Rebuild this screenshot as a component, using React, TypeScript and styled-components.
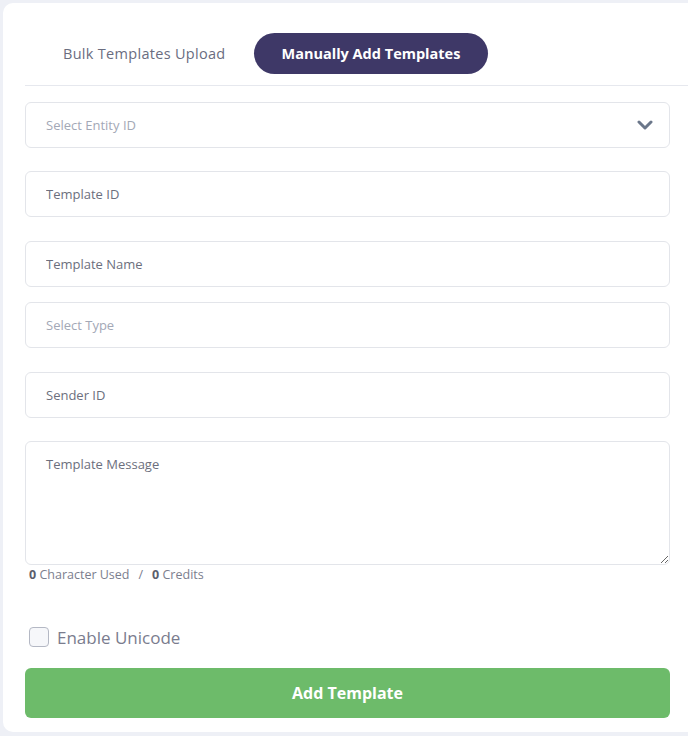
import React from "react";
import styled, { createGlobalStyle } from "styled-components";

const Global = createGlobalStyle`
  html, body { margin: 0; padding: 0; background: #eef0f6; }
  body { font-family: "Open Sans", "Noto Sans", sans-serif; }
  * { box-sizing: border-box; }
`;

const Page = styled.div`
  padding: 3px 0 4px 3px;
  height: 736px;
`;

const Card = styled.div`
  background: #ffffff;
  border-radius: 10px 0 0 10px;
  height: 729px;
  padding: 30px 18px 0 22px;
  display: flex;
  flex-direction: column;
`;

const TabBar = styled.div`
  display: flex;
  align-items: center;
  gap: 1px;
  padding: 0 0 11px 11px;
  margin-right: -18px;
  border-bottom: 1px solid #e6e8ee;
`;

const Tab = styled.button<{ $active?: boolean }>`
  height: 41px;
  padding: 0 ${(p) => (p.$active ? 28 : 27)}px;
  border: none;
  border-radius: 21px;
  background: ${(p) => (p.$active ? "#3e3867" : "transparent")};
  color: ${(p) => (p.$active ? "#ffffff" : "#6a6d7f")};
  font-family: inherit;
  font-size: 14.5px;
  font-weight: ${(p) => (p.$active ? 700 : 400)};
  letter-spacing: ${(p) => (p.$active ? "0" : "0.3px")};
  cursor: pointer;
`;

const Form = styled.div`
  display: flex;
  flex-direction: column;
  padding-top: 16px;
`;

const Field = styled.div<{ $top?: number }>`
  margin-top: ${(p) => p.$top ?? 0}px;
  height: 46px;
  border: 1px solid #e3e5ea;
  border-radius: 6px;
  display: flex;
  align-items: center;
  justify-content: space-between;
  padding: 0 16px 0 20px;
  font-size: 13px;
  color: #a3a8b6;
`;

const Input = styled.input<{ $top?: number; $muted?: boolean }>`
  margin-top: ${(p) => p.$top ?? 0}px;
  height: 46px;
  width: 100%;
  border: 1px solid #e3e5ea;
  border-radius: 6px;
  padding: 0 20px;
  font-family: inherit;
  font-size: 13px;
  outline: none;
  &::placeholder {
    color: ${(p) => (p.$muted ? "#a3a8b6" : "#6c6f7d")};
  }
`;

const TextArea = styled.textarea<{ $top?: number }>`
  margin-top: ${(p) => p.$top ?? 0}px;
  height: 124px;
  width: 100%;
  border: 1px solid #e3e5ea;
  border-radius: 6px;
  padding: 13px 20px;
  font-family: inherit;
  font-size: 13px;
  outline: none;
  resize: vertical;
  &::placeholder { color: #6c6f7d; }
`;

const Counter = styled.div`
  margin-top: 2px;
  padding-left: 4px;
  font-size: 12.5px;
  line-height: 16px;
  color: #7b7e8e;
  display: flex;
  gap: 4px;
  align-items: center;
`;

const Num = styled.b`
  color: #5b5e6c;
  font-weight: 700;
`;

const Slash = styled.span`
  margin: 0 5px;
`;

const CheckRow = styled.label`
  margin-top: 44px;
  display: flex;
  align-items: center;
  gap: 8px;
  padding-left: 4px;
  font-size: 17px;
  color: #7a7c8e;
  height: 20px;
`;

const Box = styled.span`
  width: 20px;
  height: 20px;
  border: 1px solid #b4b8c4;
  border-radius: 4px;
  background: #f6f7fa;
`;

const Submit = styled.button`
  margin-top: 21px;
  height: 50px;
  width: 100%;
  border: none;
  border-radius: 6px;
  background: #6dbb6a;
  color: #ffffff;
  font-family: inherit;
  font-size: 16px;
  font-weight: 700;
  cursor: pointer;
`;

export default function App() {
  return (
    <>
      <Global />
      <Page>
        <Card>
          <TabBar>
            <Tab>Bulk Templates Upload</Tab>
            <Tab $active>Manually Add Templates</Tab>
          </TabBar>
          <Form>
            <Field>
              <span>Select Entity ID</span>
              <svg width="16" height="10" viewBox="0 0 16 10">
                <polyline points="2,2 8,8 14,2" fill="none" stroke="#6b778a" strokeWidth="3" strokeLinecap="round" strokeLinejoin="round" />
              </svg>
            </Field>
            <Input $top={23} placeholder="Template ID" />
            <Input $top={24} placeholder="Template Name" />
            <Input $top={15} $muted placeholder="Select Type" />
            <Input $top={24} placeholder="Sender ID" />
            <TextArea $top={23} placeholder="Template Message" />
            <Counter>
              <span><Num>0</Num> Character Used</span>
              <Slash>/</Slash>
              <span><Num>0</Num> Credits</span>
            </Counter>
            <CheckRow>
              <Box />
              Enable Unicode
            </CheckRow>
            <Submit>Add Template</Submit>
          </Form>
        </Card>
      </Page>
    </>
  );
}
